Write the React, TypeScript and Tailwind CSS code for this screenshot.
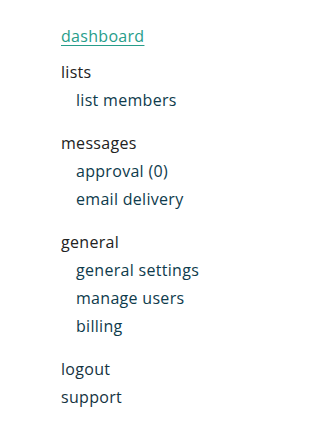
import React from "react";

const groups = [
  { title: "lists", items: ["list members"] },
  { title: "messages", items: ["approval (0)", "email delivery"] },
  { title: "general", items: ["general settings", "manage users", "billing"] },
];

export default function App() {
  return (
    <div className="min-h-[442px] w-[270px] bg-white pl-[61px] pt-[22px] font-['Open_Sans',sans-serif] text-[16px] font-medium leading-[28px] tracking-[0.3px]">
      <a href="#" className="block text-[#279d8a] underline decoration-1 underline-offset-[3px]">dashboard</a>
      <div className="mt-[8px] flex flex-col gap-[15px]">
        {groups.map((g) => (
          <div key={g.title}>
            <div className="text-[#222222]">{g.title}</div>
            <ul className="pl-[15px]">
              {g.items.map((i) => (
                <li key={i} className="text-[#0e3b4c]">{i}</li>
              ))}
            </ul>
          </div>
        ))}
        <div>
          <div className="text-[#15333f]">logout</div>
          <div className="text-[#15333f]">support</div>
        </div>
      </div>
    </div>
  );
}
